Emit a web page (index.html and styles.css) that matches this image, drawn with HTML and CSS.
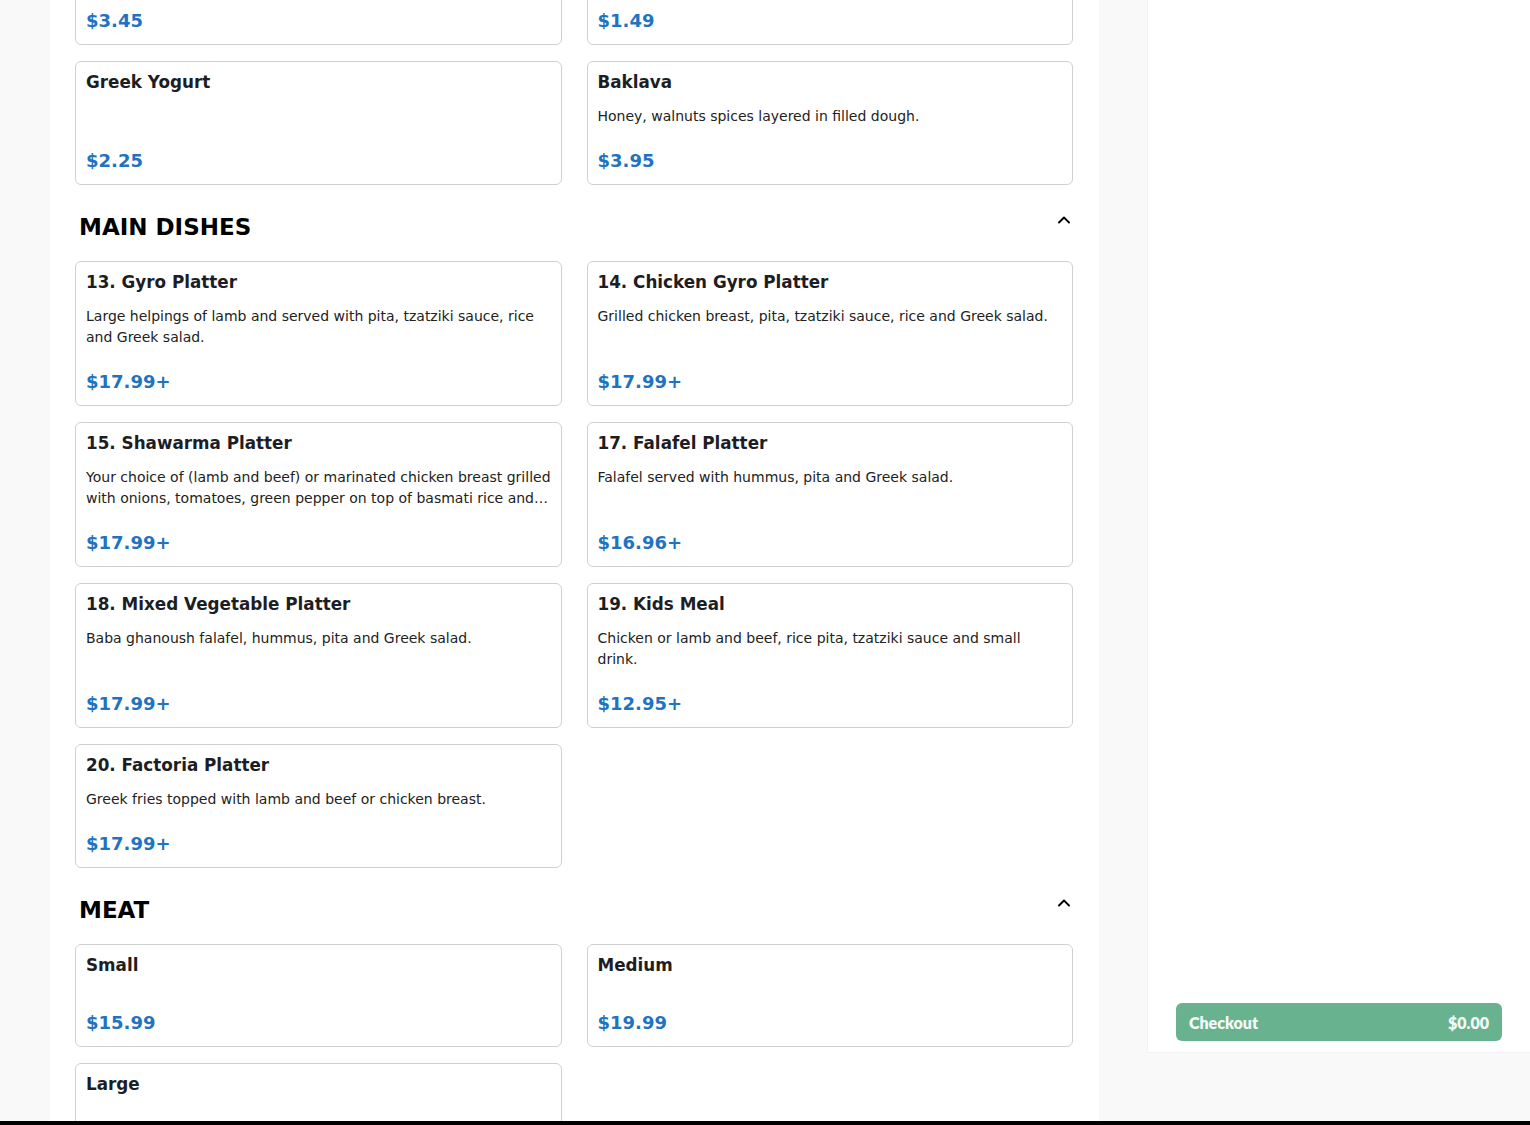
FILE: index.html
```html
<!DOCTYPE html>
<html lang="en">
<head>
    <meta charset="UTF-8" />
    <meta name="viewport" content="width=device-width, initial-scale=1.0" />
    <title>Menu - Order Online</title>
    <link rel="stylesheet" href="styles.css">
</head>
<body>
    <div class="page">
        <main class="menu" id="menu">
            <header class="menu-header">
                <h1>Order Online</h1>
            </header>

            <section class="menu-section">
                <div class="section-head">
                    <h2>SIDES &amp; DESSERTS</h2>
                    <svg class="chevron" viewBox="0 0 14 14" width="14" height="14"><path d="M2 9.5 L7 4.5 L12 9.5" /></svg>
                </div>
                <div class="items">
                    <div class="item">
                        <h3>Rice Pudding</h3>
                        <p class="desc"></p>
                        <div class="price">$3.45</div>
                    </div>
                    <div class="item">
                        <h3>Canned Soda</h3>
                        <p class="desc"></p>
                        <div class="price">$1.49</div>
                    </div>
                    <div class="item">
                        <h3>Greek Yogurt</h3>
                        <p class="desc"></p>
                        <div class="price">$2.25</div>
                    </div>
                    <div class="item">
                        <h3>Baklava</h3>
                        <p class="desc">Honey, walnuts spices layered in filled dough.</p>
                        <div class="price">$3.95</div>
                    </div>
                </div>
            </section>

            <section class="menu-section" id="main-dishes">
                <div class="section-head">
                    <h2>MAIN DISHES</h2>
                    <svg class="chevron" viewBox="0 0 14 14" width="14" height="14"><path d="M2 9.5 L7 4.5 L12 9.5" /></svg>
                </div>
                <div class="items">
                    <div class="item">
                        <h3>13. Gyro Platter</h3>
                        <p class="desc">Large helpings of lamb and served with pita, tzatziki sauce, rice and Greek salad.</p>
                        <div class="price">$17.99+</div>
                    </div>
                    <div class="item">
                        <h3>14. Chicken Gyro Platter</h3>
                        <p class="desc">Grilled chicken breast, pita, tzatziki sauce, rice and Greek salad.</p>
                        <div class="price">$17.99+</div>
                    </div>
                    <div class="item">
                        <h3>15. Shawarma Platter</h3>
                        <p class="desc">Your choice of (lamb and beef) or marinated chicken breast grilled with onions, tomatoes, green pepper on top of basmati rice and served with pita, tzatziki sauce and Greek salad.</p>
                        <div class="price">$17.99+</div>
                    </div>
                    <div class="item">
                        <h3>17. Falafel Platter</h3>
                        <p class="desc">Falafel served with hummus, pita and Greek salad.</p>
                        <div class="price">$16.96+</div>
                    </div>
                    <div class="item">
                        <h3>18. Mixed Vegetable Platter</h3>
                        <p class="desc">Baba ghanoush falafel, hummus, pita and Greek salad.</p>
                        <div class="price">$17.99+</div>
                    </div>
                    <div class="item">
                        <h3>19. Kids Meal</h3>
                        <p class="desc">Chicken or lamb and beef, rice pita, tzatziki sauce and small drink.</p>
                        <div class="price">$12.95+</div>
                    </div>
                    <div class="item">
                        <h3>20. Factoria Platter</h3>
                        <p class="desc">Greek fries topped with lamb and beef or chicken breast.</p>
                        <div class="price">$17.99+</div>
                    </div>
                </div>
            </section>

            <section class="menu-section">
                <div class="section-head">
                    <h2>MEAT</h2>
                    <svg class="chevron" viewBox="0 0 14 14" width="14" height="14"><path d="M2 9.5 L7 4.5 L12 9.5" /></svg>
                </div>
                <div class="items">
                    <div class="item">
                        <h3>Small</h3>
                        <p class="desc"></p>
                        <div class="price">$15.99</div>
                    </div>
                    <div class="item">
                        <h3>Medium</h3>
                        <p class="desc"></p>
                        <div class="price">$19.99</div>
                    </div>
                    <div class="item">
                        <h3>Large</h3>
                        <p class="desc"></p>
                        <div class="price">$23.99</div>
                    </div>
                </div>
            </section>

            <section class="menu-section">
                <div class="section-head">
                    <h2>DRINKS</h2>
                    <svg class="chevron" viewBox="0 0 14 14" width="14" height="14"><path d="M2 9.5 L7 4.5 L12 9.5" /></svg>
                </div>
                <div class="items">
                    <div class="item">
                        <h3>Bottled Water</h3>
                        <p class="desc"></p>
                        <div class="price">$1.49</div>
                    </div>
                </div>
            </section>
        </main>

        <aside class="cart">
            <button class="checkout">
                <span>Checkout</span>
                <span>$0.00</span>
            </button>
        </aside>
    </div>
    <div class="bottom-edge"></div>

    <script>
        // keep the menu scrolled to the main dishes, as when browsing
        function scrollMenu() {
            const menu = document.getElementById("menu");
            const mainDishes = document.getElementById("main-dishes");
            const offset = mainDishes.getBoundingClientRect().top - menu.getBoundingClientRect().top + menu.scrollTop;
            menu.scrollTop = offset - 185;
        }
        scrollMenu();
        window.addEventListener("load", scrollMenu);
    </script>
</body>
</html>
```

FILE: styles.css
```css
/* Reset and general styles */
* {
    box-sizing: border-box;
}
html, body {
    height: 100%;
}
body {
    margin: 0;
    overflow: hidden;
    background-color: #f9f9f9;
    font-family: "DejaVu Sans", "Liberation Sans", sans-serif;
    color: #1d1d24;
}

/* Page layout */
.page {
    display: grid;
    grid-template-columns: 1fr 383px;
    column-gap: 48px;
    align-items: start;
    height: 100vh;
    padding-left: 50px;
}
.menu {
    height: 100vh;
    overflow-y: auto;
    scrollbar-width: none;
    background-color: #fff;
    padding: 0 26px 60px 25px;
}
.menu::-webkit-scrollbar {
    display: none;
}
.menu-header {
    height: 72px;
    display: flex;
    align-items: center;
    padding-left: 4px;
}
.menu-header h1 {
    margin: 0;
    font-size: 24px;
}

/* Menu sections */
.menu-section {
    padding-top: 28px;
}
.section-head {
    display: flex;
    justify-content: space-between;
    align-items: flex-start;
    padding: 0 2px 0 4px;
    margin-bottom: 20px;
}
.section-head h2 {
    margin: 0;
    font-size: 23px;
    line-height: 28px;
    font-weight: bold;
    color: #000;
}
.chevron {
    margin-top: 0;
    fill: none;
    stroke: #000;
    stroke-width: 1.9;
    stroke-linecap: round;
    stroke-linejoin: round;
}

/* Item cards */
.items {
    display: grid;
    grid-template-columns: 1fr 1fr;
    column-gap: 25px;
    row-gap: 16px;
}
.item {
    display: flex;
    flex-direction: column;
    min-height: 103px;
    border: 1px solid #d0d0d0;
    border-radius: 6px;
    padding: 10px 10px 9px;
    background-color: #fff;
}
.item h3 {
    margin: 0;
    font-size: 16.8px;
    line-height: 20px;
    font-weight: bold;
    color: #1d1d24;
}
.desc {
    flex: 1;
    margin: 14px 0 20px;
    font-size: 14px;
    line-height: 21px;
    color: #222;
    display: -webkit-box;
    -webkit-line-clamp: 2;
    -webkit-box-orient: vertical;
    overflow: hidden;
}
.price {
    font-size: 18px;
    line-height: 28px;
    font-weight: bold;
    color: #1f73c1;
}

/* Cart sidebar */
.cart {
    height: calc(100vh - 72px);
    background-color: #fff;
    border-left: 1px solid #f2f2f2;
    border-bottom: 1px solid #f2f2f2;
    display: flex;
    flex-direction: column;
    justify-content: flex-end;
    padding: 0 28px 11px 28px;
}
.checkout {
    display: flex;
    justify-content: space-between;
    align-items: center;
    height: 38px;
    width: 100%;
    padding: 0 13px;
    border: none;
    border-radius: 6px;
    background-color: #69b290;
    color: #f4faf7;
    font-family: "Lato", "Noto Sans", sans-serif;
    font-weight: 800;
    font-size: 16px;
}

.bottom-edge {
    position: fixed;
    left: 0;
    right: 0;
    bottom: 0;
    height: 4px;
    background-color: #000;
}
```
